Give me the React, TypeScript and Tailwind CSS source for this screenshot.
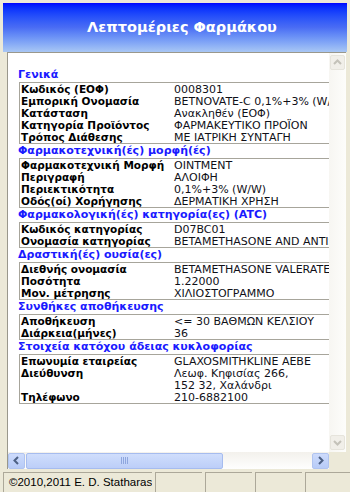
import React from "react";

type Row = [string, string];

const sections: { title: string; rows: Row[] }[] = [
  {
    title: "Γενικά",
    rows: [
      ["Κωδικός (ΕΟΦ)", "0008301"],
      ["Εμπορική Ονομασία", "BETNOVATE-C 0,1%+3% (W/W) OINTMENT"],
      ["Κατάσταση", "Ανακληθέν (ΕΟΦ)"],
      ["Κατηγορία Προϊόντος", "ΦΑΡΜΑΚΕΥΤΙΚΟ ΠΡΟΪΟΝ"],
      ["Τρόπος Διάθεσης", "ΜΕ ΙΑΤΡΙΚΗ ΣΥΝΤΑΓΗ"],
    ],
  },
  {
    title: "Φαρμακοτεχνική(ές) μορφή(ές)",
    rows: [
      ["Φαρμακοτεχνική Μορφή", "OINTMENT"],
      ["Περιγραφή", "ΑΛΟΙΦΗ"],
      ["Περιεκτικότητα", "0,1%+3% (W/W)"],
      ["Οδός(οί) Χορήγησης", "ΔΕΡΜΑΤΙΚΗ ΧΡΗΣΗ"],
    ],
  },
  {
    title: "Φαρμακολογική(ές) κατηγορία(ες) (ATC)",
    rows: [
      ["Κωδικός κατηγορίας", "D07BC01"],
      ["Ονομασία κατηγορίας", "BETAMETHASONE AND ANTISEPTICS"],
    ],
  },
  {
    title: "Δραστική(ές) ουσία(ες)",
    rows: [
      ["Διεθνής ονομασία", "BETAMETHASONE VALERATE"],
      ["Ποσότητα", "1.22000"],
      ["Μον. μέτρησης", "ΧΙΛΙΟΣΤΟΓΡΑΜΜΟ"],
    ],
  },
  {
    title: "Συνθήκες αποθήκευσης",
    rows: [
      ["Αποθήκευση", "<= 30 ΒΑΘΜΩΝ ΚΕΛΣΙΟΥ"],
      ["Διάρκεια(μήνες)", "36"],
    ],
  },
  {
    title: "Στοιχεία κατόχου άδειας κυκλοφορίας",
    rows: [
      ["Επωνυμία εταιρείας", "GLAXOSMITHKLINE AEBE"],
      ["Διεύθυνση", "Λεωφ. Κηφισίας 266,"],
      ["\u00a0", "152 32, Χαλάνδρι"],
      ["Τηλέφωνο", "210-6882100"],
    ],
  },
];

function Chevron({ dir, color }: { dir: "up" | "down" | "left" | "right"; color: string }) {
  const d = {
    up: "M3 8 L6.5 4.5 L10 8",
    down: "M3 5 L6.5 8.5 L10 5",
    left: "M8 3 L4.5 6.5 L8 10",
    right: "M5 3 L8.5 6.5 L5 10",
  }[dir];
  return (
    <svg width="13" height="13" viewBox="0 0 13 13">
      <path d={d} fill="none" stroke={color} strokeWidth="2" />
    </svg>
  );
}

export default function App() {
  return (
    <div
      className="w-[350px] h-[492px] bg-[#ece9d8] flex flex-col overflow-hidden"
      style={{ fontFamily: '"DejaVu Sans", Verdana, sans-serif' }}
    >
      {/* title bar */}
      <div className="mx-[3px] mt-[3px] h-[49px] bg-gradient-to-b from-[#0000ff] via-[#4a6cf4] to-[#a9c7f4] flex items-center justify-center pl-[14px]">
        <span className="text-white font-bold text-[14.5px]">Λεπτομέριες Φαρμάκου</span>
      </div>

      {/* details panel */}
      <div className="ml-[7px] w-[339px] h-[417px] border-l border-t border-[#9a988c] flex flex-col">
        <div className="flex flex-1 min-h-0">
          <div className="w-[321px] bg-white overflow-hidden pt-[15px] whitespace-nowrap">
            {sections.map((s) => (
              <div key={s.title}>
                <div className="h-[14px] leading-[14px] pl-[10px] text-[11px] font-bold text-[#1a1aff]">{s.title}</div>
                <div className="ml-[11px] w-[440px] border-t border-b border-l border-[#a7a59b]">
                  {s.rows.map(([k, v], i) => (
                    <div key={i} className="flex items-baseline h-[12px] leading-[12px]">
                      <span className="w-[154px] shrink-0 pl-[1px] font-bold text-black text-[10.5px]">{k}</span>
                      <span className="text-[#101018] text-[11px]">{v}</span>
                    </div>
                  ))}
                </div>
              </div>
            ))}
          </div>
          {/* vertical scrollbar (disabled) */}
          <div className="w-[17px] bg-gradient-to-r from-[#f7f6f2] to-[#fdfdfb] flex flex-col justify-between py-[2px] pl-[1px]">
            <div className="w-[15px] h-[15px] bg-[#f1efe9] border border-[#e6e4dc] rounded-[2px] flex items-center justify-center">
              <Chevron dir="up" color="#c4c2b9" />
            </div>
            <div className="w-[15px] h-[15px] bg-[#f1efe9] border border-[#e6e4dc] rounded-[2px] flex items-center justify-center">
              <Chevron dir="down" color="#c4c2b9" />
            </div>
          </div>
        </div>
        {/* horizontal scrollbar */}
        <div className="flex h-[17px]">
          <div className="w-[321px] bg-gradient-to-b from-[#f3f1ec] to-[#fefefe] flex items-center">
            <div className="w-[17px] h-[16px] bg-gradient-to-b from-[#cddbfc] to-[#b7cbf7] border border-[#b0c4f0] rounded-[2px] flex items-center justify-center">
              <Chevron dir="left" color="#4d6185" />
            </div>
            <div className="ml-[1px] w-[197px] h-[16px] bg-gradient-to-b from-[#d0defc] to-[#bccef8] border border-[#a6bcef] rounded-[2px] flex items-center justify-center gap-[1px]">
              <div className="w-[1px] h-[7px] bg-[#8ea6de]" />
              <div className="w-[1px] h-[7px] bg-[#8ea6de]" />
              <div className="w-[1px] h-[7px] bg-[#8ea6de]" />
              <div className="w-[1px] h-[7px] bg-[#8ea6de]" />
            </div>
            <div className="flex-1" />
            <div className="w-[17px] h-[16px] bg-gradient-to-b from-[#cddbfc] to-[#b7cbf7] border border-[#b0c4f0] rounded-[2px] flex items-center justify-center">
              <Chevron dir="right" color="#4d6185" />
            </div>
          </div>
          <div className="w-[17px] bg-[#ece9d8]" />
        </div>
      </div>

      {/* status bar */}
      <div className="mt-[3px] flex gap-[3px] pl-[3px] h-[20px]">
        <div
          className="w-[149px] shrink-0 whitespace-nowrap overflow-hidden border-t border-l border-[#aca899] bg-[#ece9d8] pl-[5px] leading-[19px] text-[11.5px] text-black"
          style={{ fontFamily: '"Liberation Sans", Arial, sans-serif' }}
        >
          ©2010,2011 E. D. Statharas
        </div>
        <div className="w-[47px] border-t border-l border-[#aca899]" />
        <div className="w-[47px] border-t border-l border-[#aca899]" />
        <div className="w-[47px] border-t border-l border-[#aca899]" />
        <div className="w-[45px] border-t border-l border-[#aca899]" />
      </div>
    </div>
  );
}
